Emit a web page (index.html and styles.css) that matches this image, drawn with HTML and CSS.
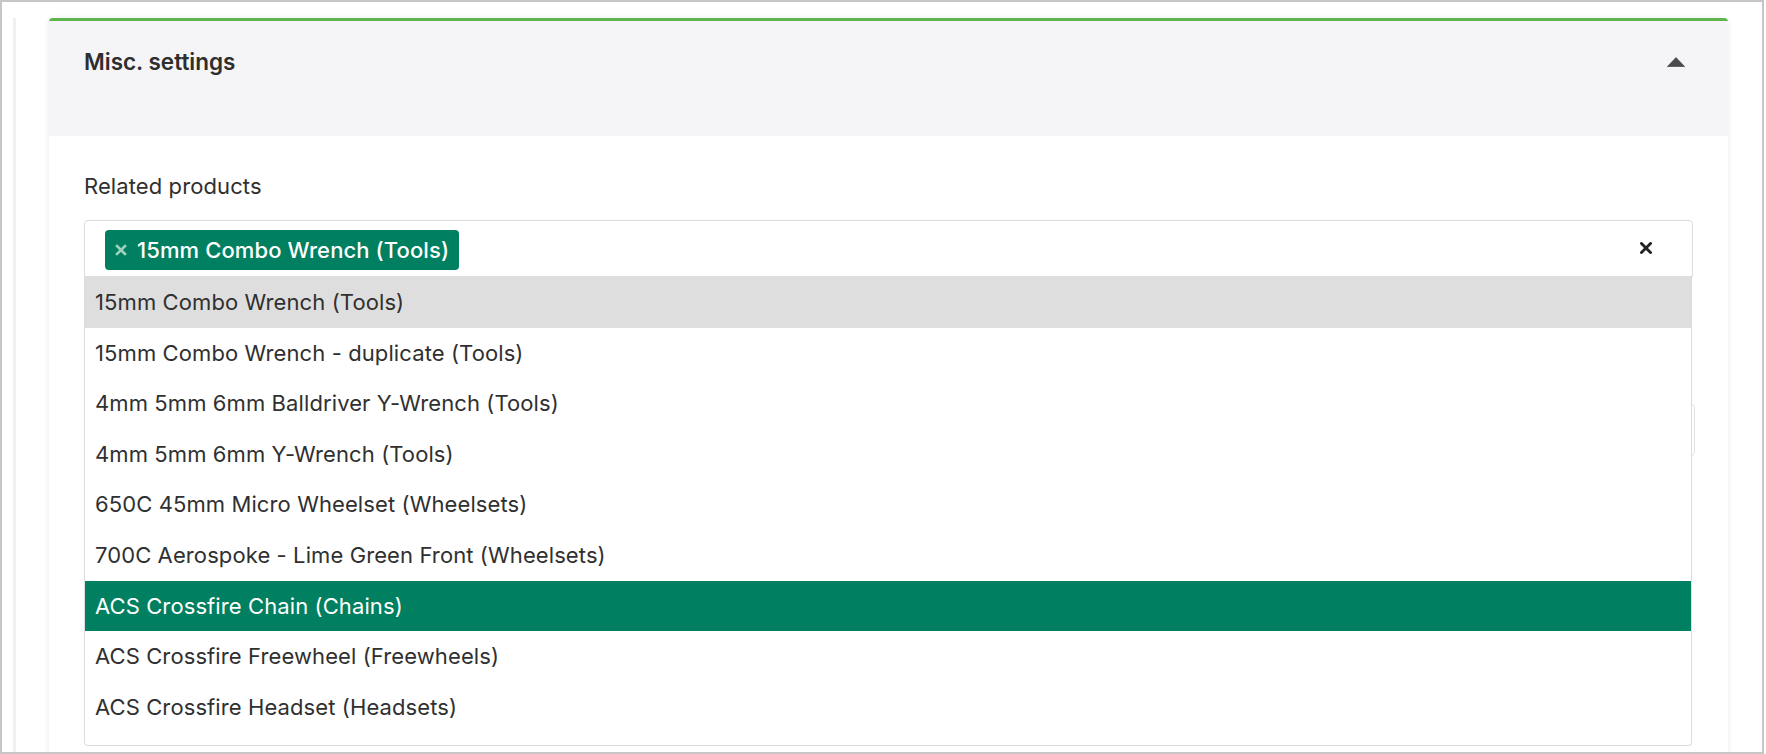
FILE: index.html
```html
<!DOCTYPE html>
<html lang="en">
<head>
<meta charset="utf-8">
<title>Misc. settings</title>
<link rel="stylesheet" href="styles.css">
</head>
<body>
<div class="frame">
  <div class="main">
    <section class="card">
      <header class="card-header">
        <h2 class="card-title">Misc. settings</h2>
        <svg class="collapse-icon" width="18" height="10" viewBox="0 0 18 10" aria-hidden="true">
          <path d="M9 0.6 L17.6 9.6 L0.4 9.6 Z" fill="#4a4a4a" stroke="#4a4a4a" stroke-width="0.8" stroke-linejoin="round"/>
        </svg>
      </header>
      <div class="card-body">
        <div class="field">
          <label class="field-label">Related products</label>
          <div class="select-wrap">
            <div class="select">
              <span class="tag">
                <svg class="tag-remove" width="12" height="12" viewBox="0 0 12 12" aria-hidden="true">
                  <path d="M2 2 L10 10 M10 2 L2 10" stroke="currentColor" stroke-width="2.6" stroke-linecap="square"/>
                </svg>
                <span class="tag-text">15mm Combo Wrench (Tools)</span>
              </span>
              <svg class="clear-icon" width="12" height="12" viewBox="0 0 12 12" aria-hidden="true">
                <path d="M1.5 1.5 L10.5 10.5 M10.5 1.5 L1.5 10.5" stroke="currentColor" stroke-width="2.8" stroke-linecap="square"/>
              </svg>
            </div>
            <ul class="dropdown">
              <li class="option hover">15mm Combo Wrench (Tools)</li>
              <li class="option">15mm Combo Wrench - duplicate (Tools)</li>
              <li class="option">4mm 5mm 6mm Balldriver Y-Wrench (Tools)</li>
              <li class="option">4mm 5mm 6mm Y-Wrench (Tools)</li>
              <li class="option">650C 45mm Micro Wheelset (Wheelsets)</li>
              <li class="option">700C Aerospoke - Lime Green Front (Wheelsets)</li>
              <li class="option active">ACS Crossfire Chain (Chains)</li>
              <li class="option">ACS Crossfire Freewheel (Freewheels)</li>
              <li class="option">ACS Crossfire Headset (Headsets)</li>
            </ul>
          </div>
        </div>
        <div class="field field-under">
          <div class="input"></div>
        </div>
      </div>
    </section>
  </div>
</div>
</body>
</html>
```

FILE: styles.css
```css
* { box-sizing: border-box; }

html, body {
  margin: 0;
  padding: 0;
  background: #ffffff;
}

body {
  font-family: Inter, "Liberation Sans", Arial, sans-serif;
  color: #303030;
  width: 1766px;
  height: 754px;
  overflow: hidden;
}

.frame {
  width: 1764px;
  height: 754px;
  border: 2px solid #c6c6c6;
  padding: 16px 0 0 11px;
  overflow: hidden;
  background: #ffffff;
}

.main {
  height: 100%;
  border-left: 3px solid #f1f1f1;
  padding-left: 33px;
}

.card {
  width: 1679px;
  background: #ffffff;
  border-top: 3px solid #5db54b;
  border-radius: 4px 4px 0 0;
  box-shadow: 0 1px 6px rgba(0, 0, 0, 0.09);
  min-height: 800px;
}

.card-header {
  height: 115px;
  background: #f5f5f7;
  padding: 25px 43px 0 35px;
  display: flex;
  justify-content: space-between;
  align-items: flex-start;
}

.card-title {
  margin: 0;
  font-size: 22.5px;
  line-height: 32px;
  font-weight: 600;
  color: #2e2e2e;
}

.collapse-icon {
  margin-top: 11px;
  display: block;
}

.card-body {
  padding: 35px 35px 0 35px;
}

.field-label {
  display: block;
  font-size: 22px;
  letter-spacing: 0.1px;
  line-height: 30px;
  color: #303030;
  margin-bottom: 19px;
}

.select-wrap {
  position: relative;
}

.select {
  height: 57px;
  border: 1px solid #dcdcdc;
  border-radius: 4px 4px 0 0;
  padding: 9px 40px 0 20px;
  display: flex;
  align-items: flex-start;
  justify-content: space-between;
}

.tag {
  height: 40px;
  background: #008060;
  color: #ffffff;
  border-radius: 4px;
  padding: 0 10px;
  display: inline-flex;
  align-items: center;
  gap: 10px;
}

.tag-remove {
  color: #9fd2bf;
  display: block;
}

.tag-text {
  font-size: 22px;
  letter-spacing: 0.1px;
  font-weight: 500;
  line-height: 40px;
  white-space: nowrap;
}

.clear-icon {
  color: #222222;
  display: block;
  margin-top: 12px;
}

.dropdown {
  position: absolute;
  top: 57px;
  left: 0;
  width: 1608px;
  height: 469px;
  margin: 0;
  padding: 0;
  list-style: none;
  background: #ffffff;
  border: 1px solid #dcdcdc;
  border-top: none;
  border-radius: 0 0 4px 4px;
  overflow: hidden;
  z-index: 5;
}

.option {
  height: 50.6px;
  line-height: 50.6px;
  padding-left: 10px;
  font-size: 22px;
  letter-spacing: 0.1px;
  color: #303030;
  white-space: nowrap;
}

.option.hover {
  background: #dedede;
}

.option.active {
  background: #008060;
  color: #ffffff;
}

.field-under {
  margin-top: 127px;
}

.input {
  height: 52px;
  margin-right: -1.5px;
  border: 1px solid #e2e2e2;
  border-radius: 4px;
}
```
